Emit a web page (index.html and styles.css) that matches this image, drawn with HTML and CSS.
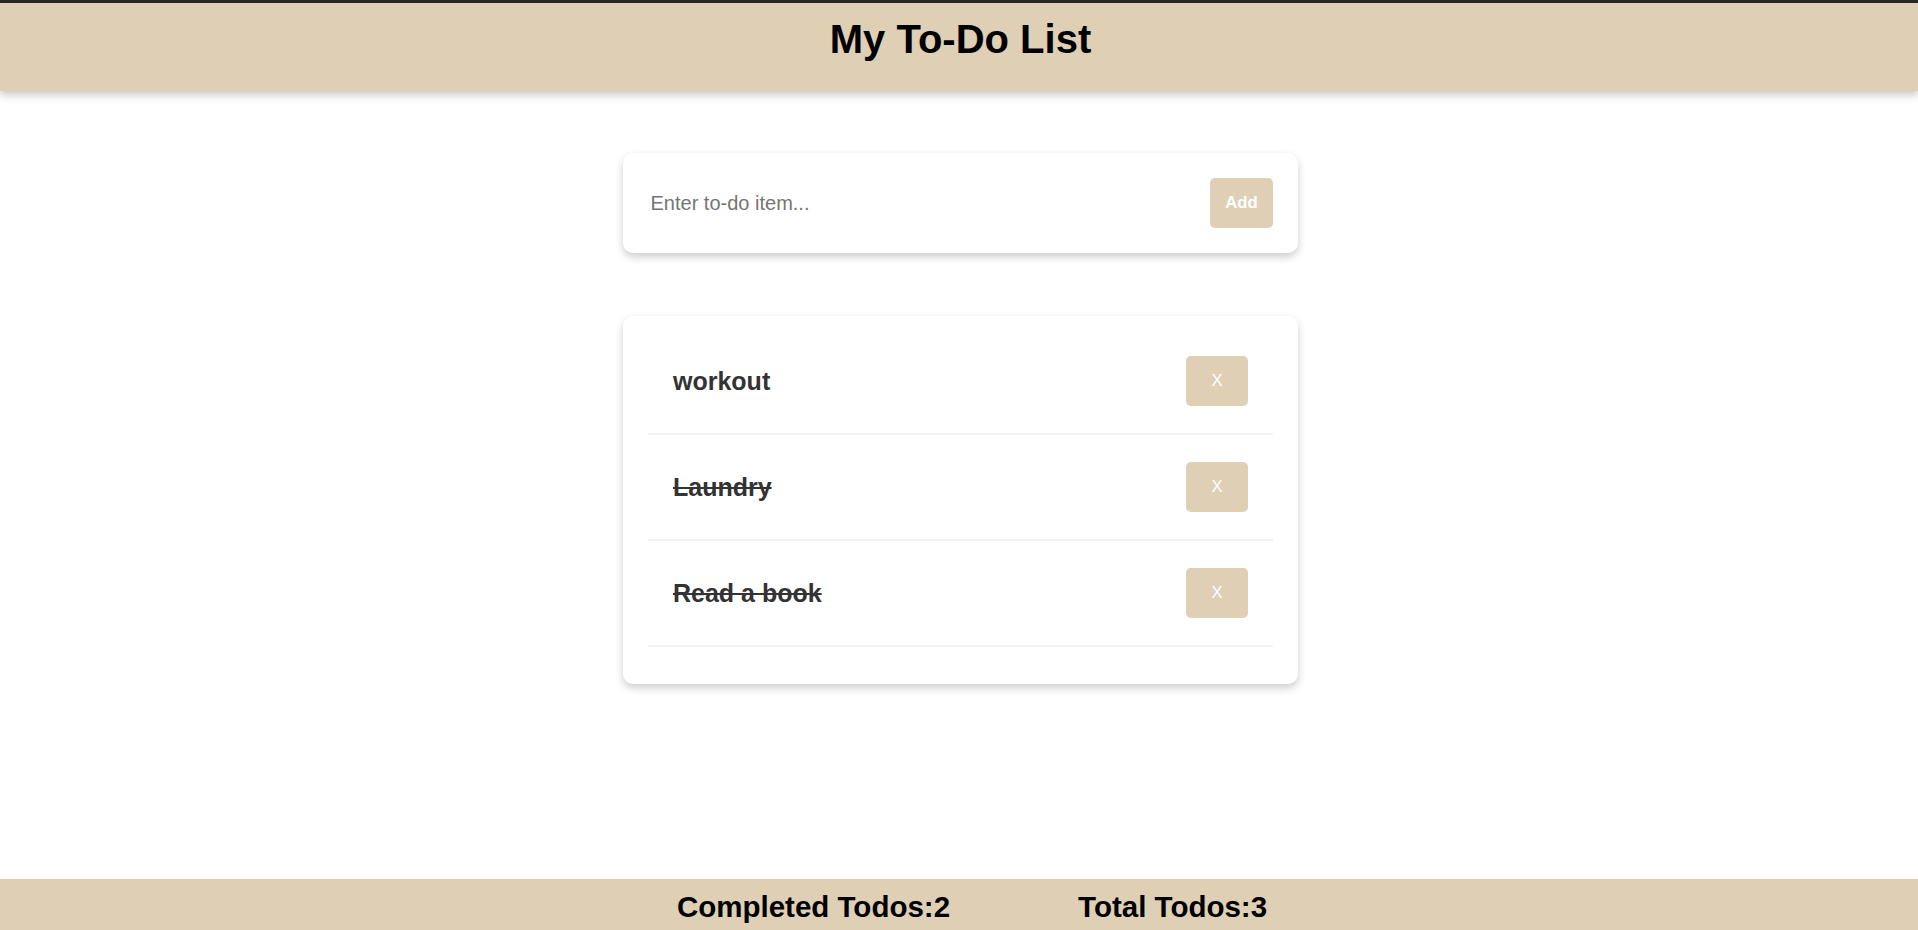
FILE: index.html
```html
<!DOCTYPE html>
<html lang="en">
<head>
<meta charset="utf-8">
<title>My To-Do List</title>
<link rel="stylesheet" href="styles.css">
</head>
<body>
  <header class="app-header">
    <h1 class="app-title">My To-Do List</h1>
  </header>
  <main class="content">
    <form class="card add-card" onsubmit="return false">
      <input class="todo-input" type="text" placeholder="Enter to-do item...">
      <button class="btn btn-add" type="submit">Add</button>
    </form>
    <section class="card list-card">
      <ul class="todo-list">
        <li class="todo-item">
          <span class="todo-text">workout</span>
          <button class="btn btn-remove" type="button">X</button>
        </li>
        <li class="todo-item">
          <span class="todo-text done">Laundry</span>
          <button class="btn btn-remove" type="button">X</button>
        </li>
        <li class="todo-item">
          <span class="todo-text done">Read a book</span>
          <button class="btn btn-remove" type="button">X</button>
        </li>
      </ul>
    </section>
  </main>
  <footer class="app-footer">
    <h2 class="stat">Completed Todos:2</h2>
    <h2 class="stat">Total Todos:3</h2>
  </footer>
</body>
</html>
```
FILE: styles.css
```css
* { box-sizing: border-box; }

html, body {
  margin: 0;
  padding: 0;
  height: 100%;
}

body {
  display: flex;
  flex-direction: column;
  min-height: 930px;
  background: #ffffff;
  font-family: "Liberation Sans", Arial, sans-serif;
  color: #000;
}

.app-header {
  height: 91px;
  border-top: 3px solid #27272a;
  background: #decfb5;
  box-shadow: 0 4px 8px rgba(0, 0, 0, 0.22);
  padding: 12.5px 0 0 3px;
  position: relative;
  z-index: 1;
}

.app-title {
  margin: 0;
  text-align: center;
  font-size: 40px;
  line-height: 46px;
  font-weight: bold;
  color: #000;
}

.content {
  width: 675px;
  margin: 0 auto;
  position: relative;
  left: 1.5px;
}

.card {
  background: #fff;
  border-radius: 10px;
  box-shadow: 0 4px 8px rgba(0, 0, 0, 0.2);
}

.add-card {
  margin: 62px 0 0;
  padding: 25px;
  display: flex;
  align-items: center;
  gap: 20px;
}

.todo-input {
  flex: 1;
  border: none;
  outline: none;
  padding: 2.5px;
  font-family: "Liberation Sans", Arial, sans-serif;
  font-size: 20px;
  color: #333;
  background: transparent;
}

.todo-input::placeholder {
  color: #757575;
}

.btn {
  border: none;
  border-radius: 5px;
  background: #decfb5;
  color: #fff;
  font-family: "Liberation Sans", Arial, sans-serif;
  font-size: 16.67px;
  height: 50px;
  padding: 0;
}

.btn-add {
  width: 63px;
  font-weight: bold;
}

.btn-remove {
  width: 62px;
  font-weight: normal;
}

.list-card {
  margin-top: 63px;
  padding: 13px 25px 37px;
}

.todo-list {
  list-style: none;
  margin: 0;
  padding: 0;
}

.todo-item {
  display: flex;
  align-items: center;
  justify-content: space-between;
  padding: 27px 25px;
  border-bottom: 2px solid #f1f1f1;
}

.todo-text {
  font-size: 25px;
  font-weight: bold;
  color: #333;
}

.todo-text.done {
  text-decoration: line-through;
}

.app-footer {
  margin-top: auto;
  height: 51px;
  background: #decfb5;
  display: flex;
  justify-content: center;
  gap: 128px;
  padding: 11px 0 0 26px;
  overflow: hidden;
}

.stat {
  margin: 0;
  font-size: 29.5px;
  line-height: 34px;
  font-weight: bold;
  color: #000;
}
```
